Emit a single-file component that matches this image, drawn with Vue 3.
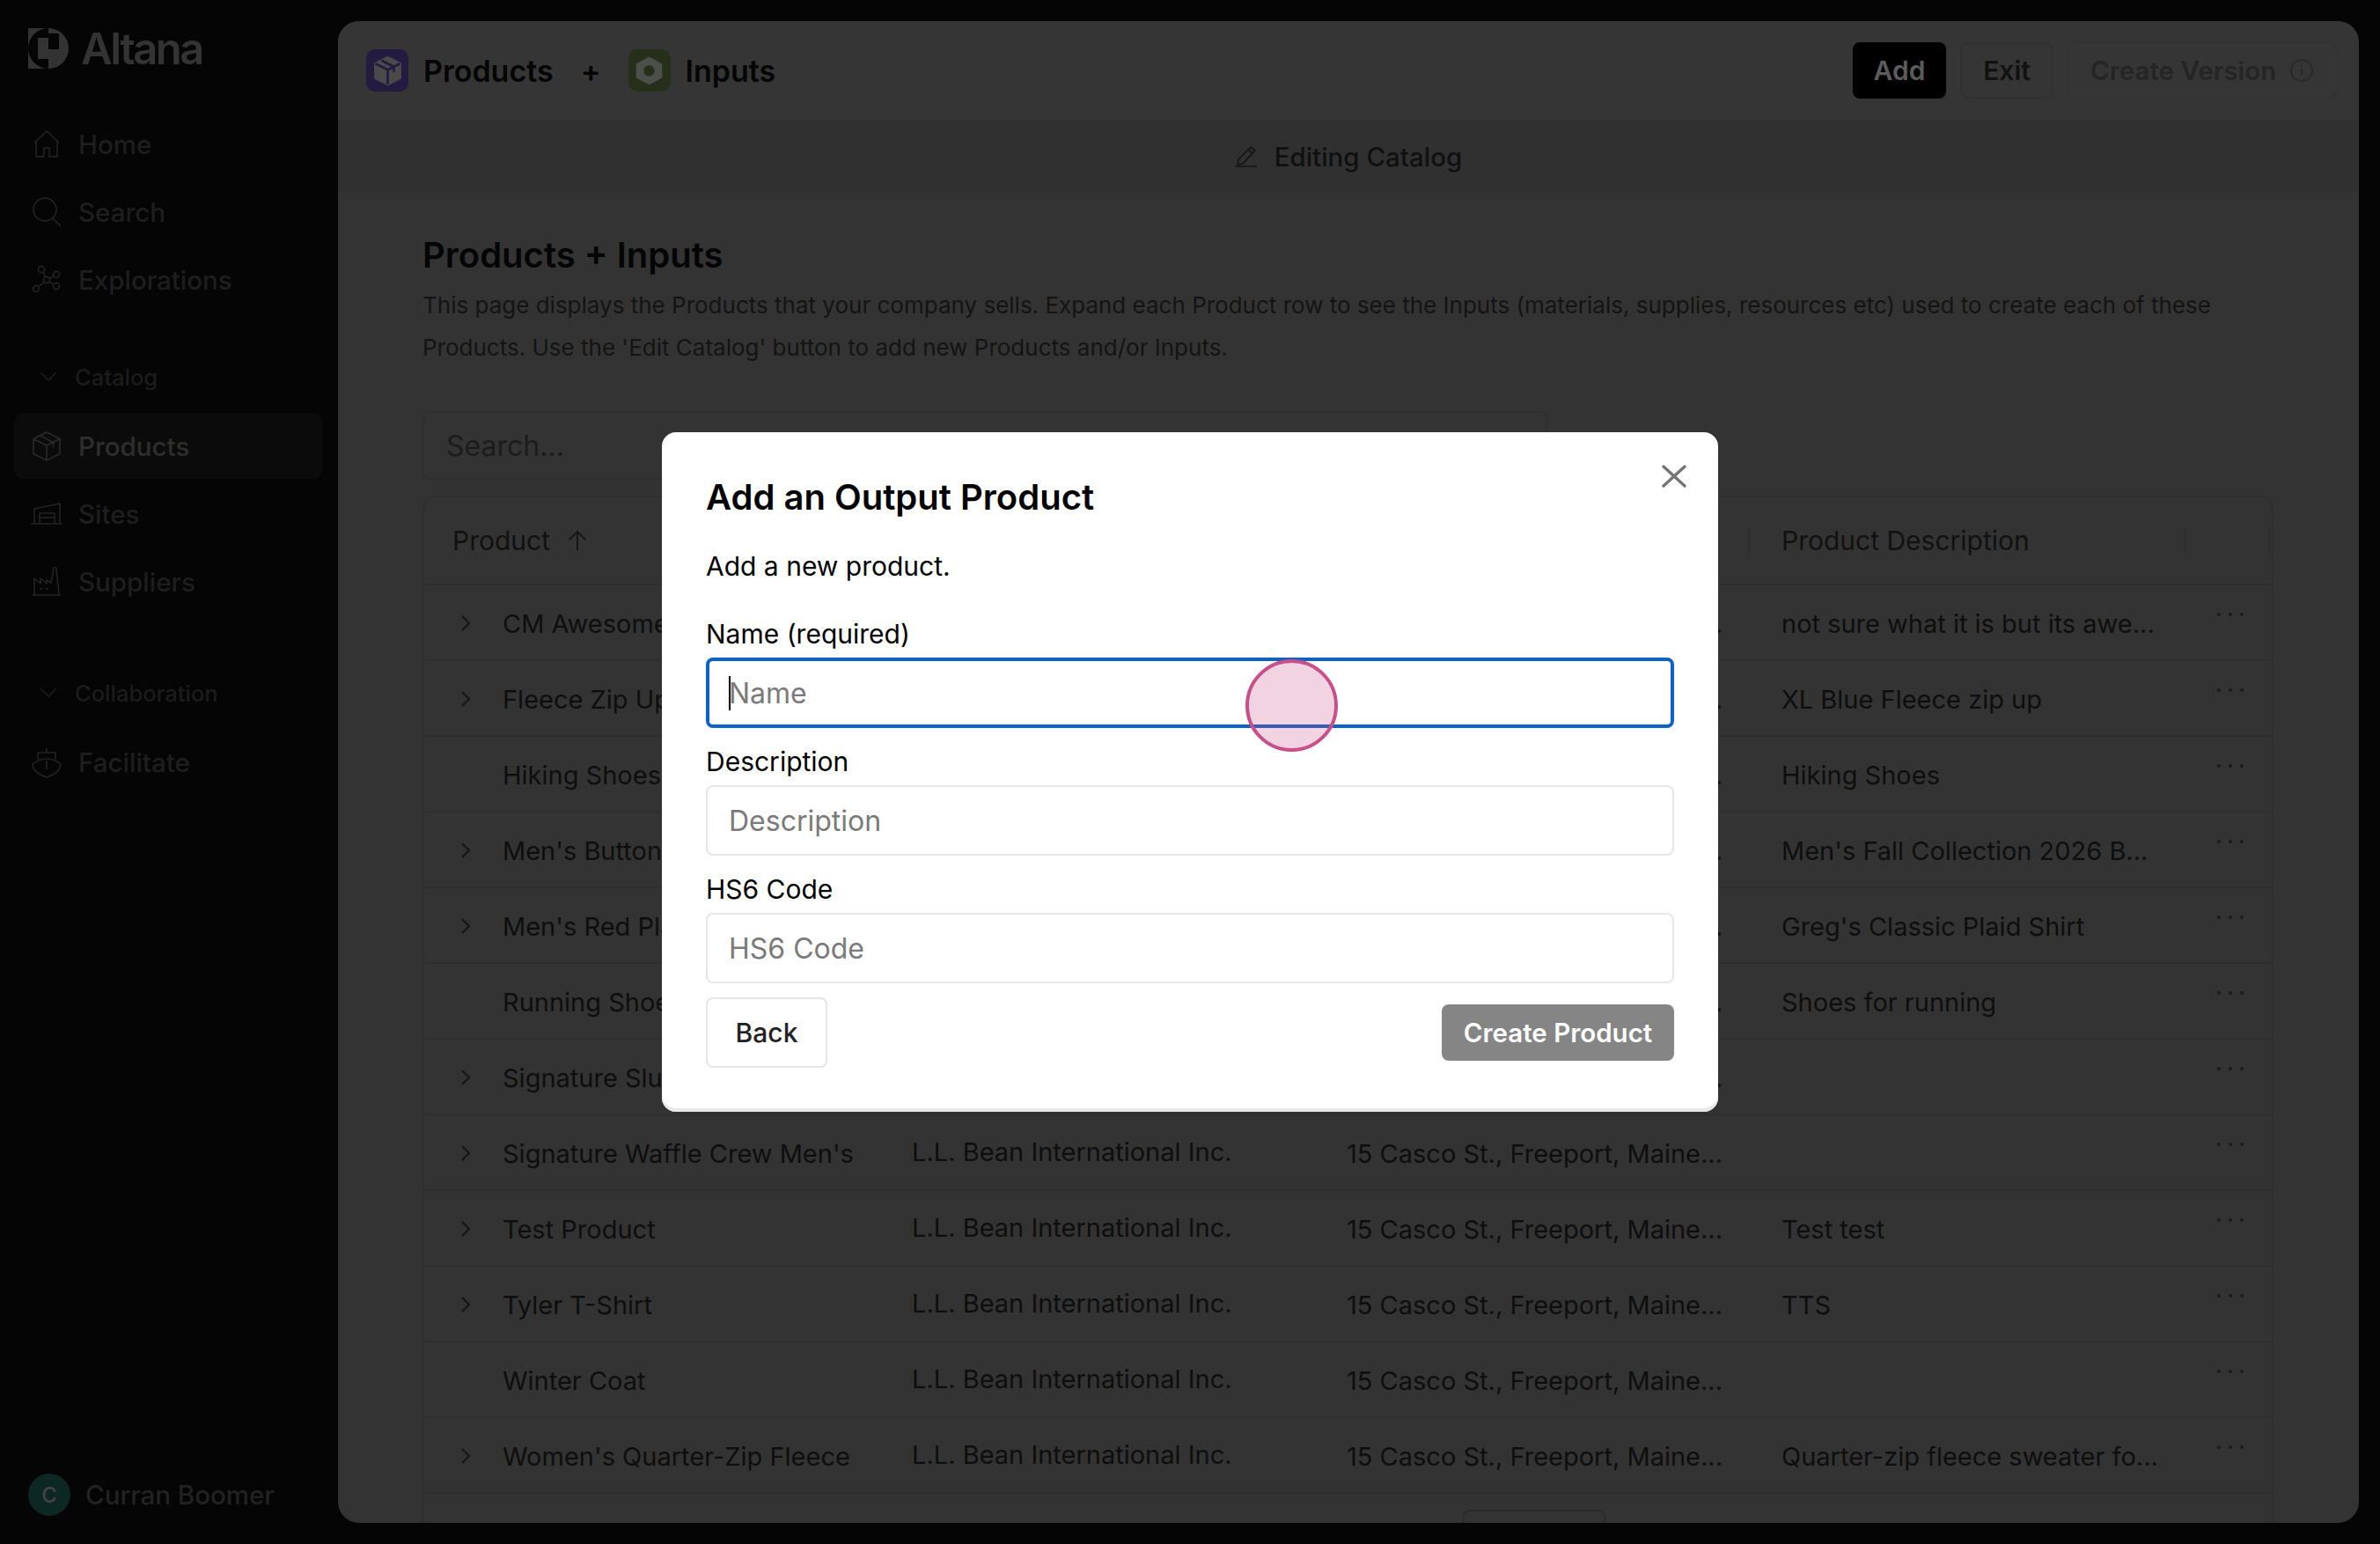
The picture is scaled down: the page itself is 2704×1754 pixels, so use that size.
<template>
  <div class="page">
    <aside class="sidebar">
      <div class="brand">
        <svg class="logo" viewBox="0 0 46 46" width="46" height="46">
          <path d="M0 0h23v46H0z" fill="#333" />
          <path d="M23 0a23 23 0 0 0 0 46z" fill="#050505" />
          <path d="M11 11h12v24H11z" fill="#333" />
          <path d="M23 0a23 23 0 0 1 0 46z" fill="#333" />
          <path d="M23 6h12v18H23z" fill="#050505" />
        </svg>
        <span class="brand-name">Altana</span>
      </div>

      <a v-for="item in topNav" :key="item.label" class="nav-item">
        <svg class="nav-icon" viewBox="0 0 34 34" fill="none" v-html="item.icon"></svg>
        {{ item.label }}
      </a>

      <div class="nav-section catalog">
        <svg viewBox="0 0 20 12" width="20" height="12" fill="none"><path d="M1 1l9 9 9-9" stroke="#1c1c1c" stroke-width="1.6" /></svg>
        Catalog
      </div>
      <a v-for="item in catalogNav" :key="item.label" :class="['nav-item', item.active ? 'active' : '']">
        <svg class="nav-icon" viewBox="0 0 34 34" fill="none" v-html="item.icon"></svg>
        {{ item.label }}
      </a>

      <div class="nav-section collab">
        <svg viewBox="0 0 20 12" width="20" height="12" fill="none"><path d="M1 1l9 9 9-9" stroke="#1c1c1c" stroke-width="1.6" /></svg>
        Collaboration
      </div>
      <a v-for="item in collabNav" :key="item.label" class="nav-item">
        <svg class="nav-icon" viewBox="0 0 34 34" fill="none" v-html="item.icon"></svg>
        {{ item.label }}
      </a>

      <div class="user">
        <span class="avatar">C</span>
        Curran Boomer
      </div>
    </aside>

    <main class="panel">
      <header class="topbar">
        <div class="crumbs">
          <span class="crumb-icon purple">
            <svg viewBox="0 0 30 30" width="35" height="35" fill="none" stroke="#4a4a4a" stroke-width="2.4" stroke-linejoin="round">
              <path d="M15 2l12 6v14l-12 6-12-6V8z" fill="#4a4a4a" />
              <path d="M3 8l12 6 12-6M15 14v14M9 5l12 6v5" stroke="#241c40" />
            </svg>
          </span>
          <span class="crumb-text">Products</span>
          <span class="plus">+</span>
          <span class="crumb-icon green">
            <svg viewBox="0 0 30 30" width="37" height="37">
              <path d="M15 2l12 6.500v13L15 28 3 21.500v-13z" fill="#4c4f4a" />
              <circle cx="15" cy="15" r="5" fill="#252f19" />
            </svg>
          </span>
          <span class="crumb-text">Inputs</span>
        </div>
        <div class="actions">
          <button class="btn btn-add">Add</button>
          <button class="btn btn-exit">Exit</button>
          <button class="btn btn-version">
            Create Version
            <svg viewBox="0 0 26 26" width="26" height="26" fill="none" stroke="#252525" stroke-width="1.6">
              <circle cx="13" cy="13" r="12" />
              <path d="M13 11.500v7" />
              <circle cx="13" cy="7.800" r="1" fill="#252525" stroke="none" />
            </svg>
          </button>
        </div>
      </header>

      <div class="subbar">
        <svg viewBox="0 0 26 24" width="26" height="24" fill="none" stroke="#141414" stroke-width="1.7" stroke-linejoin="round">
          <path d="M18 1l5 4L9 20l-6 1 1-6zM15 4l5 4" />
          <path d="M1 23h24" />
        </svg>
        <span>Editing Catalog</span>
      </div>

      <section class="content">
        <h1>Products + Inputs</h1>
        <p class="intro">
          This page displays the Products that your company sells. Expand each Product row to see the Inputs (materials, supplies, resources etc) used to create each of these Products. Use the 'Edit Catalog' button to add new Products and/or Inputs.
        </p>
        <div class="search">Search...</div>

        <div class="table">
          <div class="row head">
            <span class="head-product">
              Product
              <svg viewBox="0 0 22 24" width="22" height="24" fill="none" stroke="#161616" stroke-width="2"><path d="M11 23V2M2 11l9-9 9 9" /></svg>
            </span>
            <span class="cell-company">Company</span>
            <span class="cell-address">Site Address</span>
            <span class="cell-desc">Product Description</span>
            <i class="divider d1"></i>
            <i class="divider d2"></i>
            <i class="divider d3"></i>
          </div>
          <div v-for="row in rows" :key="row.name" class="row">
            <svg v-if="row.expand" class="chevron" viewBox="0 0 12 20" width="12" height="20" fill="none" stroke="#161616" stroke-width="2.2"><path d="M2 2l8 8-8 8" /></svg>
            <span class="cell-name">{{ row.name }}</span>
            <span class="cell-company">L.L. Bean International Inc.</span>
            <span class="cell-address">15 Casco St., Freeport, Maine...</span>
            <span class="cell-desc">{{ row.desc }}</span>
            <span class="dots"><b></b><b></b><b></b></span>
          </div>
          <div class="row last">
            <span class="pager"></span>
          </div>
        </div>
      </section>
    </main>

    <div class="modal">
      <svg class="close" viewBox="0 0 28 26" width="28" height="26" fill="none" stroke="#757575" stroke-width="3.4" stroke-linecap="round"><path d="M2 2l24 22M26 2L2 24" /></svg>
      <h2>Add an Output Product</h2>
      <p class="modal-sub">Add a new product.</p>

      <label>Name (required)</label>
      <div class="field focused"><i class="caret"></i>Name</div>
      <label>Description</label>
      <div class="field">Description</div>
      <label>HS6 Code</label>
      <div class="field">HS6 Code</div>

      <div class="modal-foot">
        <button class="back">Back</button>
        <button class="create">Create Product</button>
      </div>
    </div>

    <div class="click-dot"></div>
  </div>
</template>

<script setup>
// sidebar icons, same stroke everywhere
const stroke = 'stroke="#232323" stroke-width="1.6" stroke-linejoin="round"'

const topNav = [
  { label: "Home", icon: `<path d="M3 15L17 2l14 13M5 13v18h9V21h6v10h9V13" ${stroke}/>` },
  { label: "Search", icon: `<circle cx="15" cy="14" r="13" ${stroke}/><path d="M24 24l9 9" ${stroke}/>` },
  {
    label: "Explorations",
    icon: `<circle cx="17" cy="17" r="3.6" ${stroke}/><circle cx="11" cy="5" r="3.6" ${stroke}/><circle cx="28" cy="11" r="3.6" ${stroke}/><circle cx="28" cy="24" r="3.6" ${stroke}/><circle cx="5" cy="27" r="3.6" ${stroke}/><path d="M13 8l2.500 6M20 16l5-3.500M20 19l5 3.500M14 19.500l-6 5" ${stroke}/>`
  }
]

const catalogNav = [
  {
    label: "Products",
    active: true,
    icon: `<path d="M17 1l15 7.500v17L17 33 2 25.500v-17zM2 8.500L17 16l15-7.500M17 16v17M9.500 4.700L24.500 12.500v6" stroke="#2a2a2a" stroke-width="1.6" stroke-linejoin="round"/>`
  },
  {
    label: "Sites",
    icon: `<path d="M-1 27h36M3 27V10l29-6v23M9 27V15h17v12M9 20h17" ${stroke} transform="translate(0 1)"/>`
  },
  {
    label: "Suppliers",
    icon: `<path d="M1 32h32M3 32V13l7 6v-6l7 6V15l5 3 3-17h3l3 31M9 25h3M16 25h3" ${stroke}/>`
  }
]

const collabNav = [
  {
    label: "Facilitate",
    icon: `<path d="M17 1v5M7 14V6h20v8M1 19c5-4 11-6 16-6s11 2 16 6c0 8-8 12-16 15C9 31 1 27 1 19zM17 15v10" ${stroke}/>`
  }
]

const rows = [
  { name: "CM Awesome Tee", expand: true, desc: "not sure what it is but its awe..." },
  { name: "Fleece Zip Up", expand: true, desc: "XL Blue Fleece zip up" },
  { name: "Hiking Shoes", expand: false, desc: "Hiking Shoes" },
  { name: "Men's Button Down", expand: true, desc: "Men's Fall Collection 2026 B..." },
  { name: "Men's Red Plaid Shirt", expand: true, desc: "Greg's Classic Plaid Shirt" },
  { name: "Running Shoes", expand: false, desc: "Shoes for running" },
  { name: "Signature Slub Tee", expand: true, desc: "" },
  { name: "Signature Waffle Crew Men's", expand: true, desc: "" },
  { name: "Test Product", expand: true, desc: "Test test" },
  { name: "Tyler T-Shirt", expand: true, desc: "TTS" },
  { name: "Winter Coat", expand: false, desc: "" },
  { name: "Women's Quarter-Zip Fleece", expand: true, desc: "Quarter-zip fleece sweater fo..." }
]
</script>

<style>
html,
body {
  margin: 0;
  background: #050505;
}
</style>

<style scoped>
.page {
  position: relative;
  display: flex;
  width: 2704px;
  height: 1754px;
  overflow: hidden;
  background: #050505;
  font-family: Inter, "Liberation Sans", sans-serif;
}

/* ---------- sidebar ---------- */
.sidebar {
  display: flex;
  flex-direction: column;
  flex: 0 0 384px;
  box-sizing: border-box;
  padding: 32px 18px 32px 16px;
}

.brand {
  display: flex;
  align-items: center;
  gap: 14px;
  height: 46px;
  margin: 0 0 47px 16px;
}

.brand-name {
  color: #333;
  font-size: 49px;
  font-weight: 600;
  letter-spacing: -2.5px;
}

.nav-item {
  display: flex;
  align-items: center;
  gap: 19px;
  height: 77px;
  padding-left: 20px;
  border-radius: 10px;
  color: #1e1e1e;
  font-size: 29.5px;
  font-weight: 500;
}

.nav-item.active {
  height: 75px;
  margin-bottom: 1px;
  background: #0b0b0b;
  color: #2e2e2e;
}

.nav-icon {
  width: 34px;
  height: 34px;
  overflow: visible;
}

.nav-section {
  display: flex;
  align-items: center;
  gap: 20px;
  height: 42px;
  padding-left: 29px;
  color: #1c1c1c;
  font-size: 25.5px;
  font-weight: 500;
}

.nav-section.catalog {
  margin: 51px 0 20px;
}

.nav-section.collab {
  margin: 67px 0 19px;
}

.user {
  display: flex;
  align-items: center;
  gap: 17px;
  margin: auto 0 0 16px;
  color: #222;
  font-size: 29.5px;
  font-weight: 500;
}

.avatar {
  display: flex;
  align-items: center;
  justify-content: center;
  width: 48px;
  height: 48px;
  border-radius: 50%;
  background: #0d2722;
  color: #444;
  font-size: 24px;
}

/* ---------- main panel ---------- */
.panel {
  flex: 1;
  margin: 24px 24px 24px 0;
  overflow: hidden;
  border-radius: 24px;
  background: #333;
}

.topbar {
  display: flex;
  align-items: center;
  justify-content: space-between;
  box-sizing: border-box;
  height: 112px;
  padding: 0 24px 0 32px;
  background: #353535;
}

.crumbs {
  display: flex;
  align-items: center;
}

.crumb-icon {
  display: flex;
  align-items: center;
  justify-content: center;
  width: 48px;
  height: 48px;
  border-radius: 10px;
}

.crumb-icon.purple {
  background: #241c40;
}

.crumb-icon.green {
  background: #252f19;
}

.crumb-text {
  margin-left: 17px;
  color: #050505;
  font-size: 34px;
  font-weight: 600;
}

.plus {
  margin: 0 31px;
  color: #050505;
  font-size: 34px;
  font-weight: 600;
}

.actions {
  display: flex;
  gap: 17px;
}

.btn {
  box-sizing: border-box;
  height: 64px;
  border: 2px solid #313131;
  border-radius: 8px;
  background: none;
  font: 600 30px Inter, "Liberation Sans", sans-serif;
}

.btn-add {
  width: 106px;
  border-color: #000;
  background: #000;
  color: #5c5c5c;
}

.btn-exit {
  width: 104px;
  color: #111;
}

.btn-version {
  display: flex;
  align-items: center;
  gap: 16px;
  width: 307px;
  padding-left: 24px;
  border-color: #333;
  color: #252525;
  font-size: 29.5px;
}

.subbar {
  display: flex;
  align-items: center;
  justify-content: center;
  gap: 19px;
  height: 82px;
  padding-top: 2px;
  box-sizing: border-box;
  background: #303031;
  color: #101010;
  font-size: 29.5px;
  font-weight: 500;
}

.content {
  padding: 48px 97px 0 96px;
}

h1 {
  margin: 0 0 9px;
  color: #050505;
  font-size: 40px;
  font-weight: 600;
  line-height: 48px;
}

.intro {
  margin: 0 0 48px;
  color: #141414;
  font-size: 26px;
  line-height: 48px;
}

.search {
  box-sizing: border-box;
  width: 1279px;
  height: 78px;
  margin-bottom: 18px;
  padding-left: 25px;
  border: 2px solid #2f2f2f;
  border-radius: 8px;
  color: #1c1c1c;
  font-size: 32px;
  line-height: 75px;
}

.table {
  border: 2px solid #2f2f2f;
  border-radius: 14px;
  color: #0e0e0e;
  font-size: 29px;
}

.row {
  position: relative;
  display: grid;
  grid-template-columns: 89px 465px 494px 494px 494px 1fr;
  align-items: center;
  height: 82px;
  padding-top: 2px;
  border-top: 2px solid #2e2e2e;
}

.row.head {
  height: 98px;
  padding-top: 0;
  border-top: 0;
  grid-template-columns: 554px 494px 494px 1fr;
  color: #111;
  font-size: 30px;
}

.row.head .cell-company,
.row.head .cell-address {
  visibility: hidden;
}

.head-product {
  display: flex;
  align-items: center;
  gap: 20px;
  padding-left: 32px;
}

.divider {
  position: absolute;
  top: 34px;
  width: 3px;
  height: 30px;
  background: #2e2e2e;
}

.d1 {
  left: 1504px;
}

.d2 {
  left: 1999px;
}

.d3 {
  left: 2095px;
}

.chevron {
  grid-column: 1;
  margin-left: 41px;
}

.cell-name {
  grid-column: 2;
}

.cell-company {
  margin-top: -4px;
}

.row .cell-address,
.row .cell-desc {
  white-space: nowrap;
}

.dots {
  display: flex;
  gap: 9px;
  align-self: start;
  margin: 29px 0 0 1px;
}

.dots b {
  width: 4px;
  height: 4px;
  border-radius: 50%;
  background: #1c1c1c;
}

.row.last {
  display: block;
}

.pager {
  position: absolute;
  top: 18px;
  left: 1180px;
  width: 158px;
  height: 60px;
  border: 2px solid #2a2a2a;
  border-radius: 8px;
}

/* ---------- dialog on top ---------- */
.modal {
  position: absolute;
  top: 491px;
  left: 752px;
  box-sizing: border-box;
  width: 1200px;
  height: 772px;
  padding: 50px;
  border-radius: 16px;
  background: #fff;
  box-shadow: inset 0 -4px 0 #e8e8e8;
  color: #000;
}

.close {
  position: absolute;
  top: 37px;
  right: 36px;
}

h2 {
  margin: 0;
  font-size: 40px;
  font-weight: 600;
  line-height: 48px;
}

.modal-sub {
  margin: 30px 0 0;
  font-size: 30px;
  line-height: 48px;
}

label {
  display: block;
  margin-top: 29px;
  margin-bottom: 3px;
  font-size: 30px;
  font-weight: 400;
  line-height: 48px;
}

.field + label {
  margin-top: 14px;
}

.field {
  position: relative;
  box-sizing: border-box;
  height: 80px;
  padding-left: 24px;
  border: 2px solid #e6e6e6;
  border-radius: 8px;
  color: #7a7a7a;
  font-size: 32px;
  line-height: 77px;
}

.field.focused {
  padding-left: 22px;
  border: 4px solid #0b62c8;
  line-height: 73px;
}

.caret {
  position: absolute;
  top: 17px;
  left: 22px;
  width: 2px;
  height: 39px;
  background: #000;
}

.modal-foot {
  display: flex;
  align-items: center;
  justify-content: space-between;
  margin-top: 16px;
}

.back {
  box-sizing: border-box;
  width: 138px;
  height: 80px;
  border: 2px solid #e6e6e6;
  border-radius: 8px;
  background: #fff;
  color: #222;
  font: 500 30px Inter, "Liberation Sans", sans-serif;
}

.create {
  width: 264px;
  height: 64px;
  border: 0;
  border-radius: 8px;
  background: #858585;
  color: #fff;
  font: 600 29.5px Inter, "Liberation Sans", sans-serif;
}

.click-dot {
  position: absolute;
  top: 749px;
  left: 1415px;
  box-sizing: border-box;
  width: 105px;
  height: 105px;
  border: 4px solid #c94f8b;
  border-radius: 50%;
  background: rgba(200, 70, 130, 0.24);
}
</style>
